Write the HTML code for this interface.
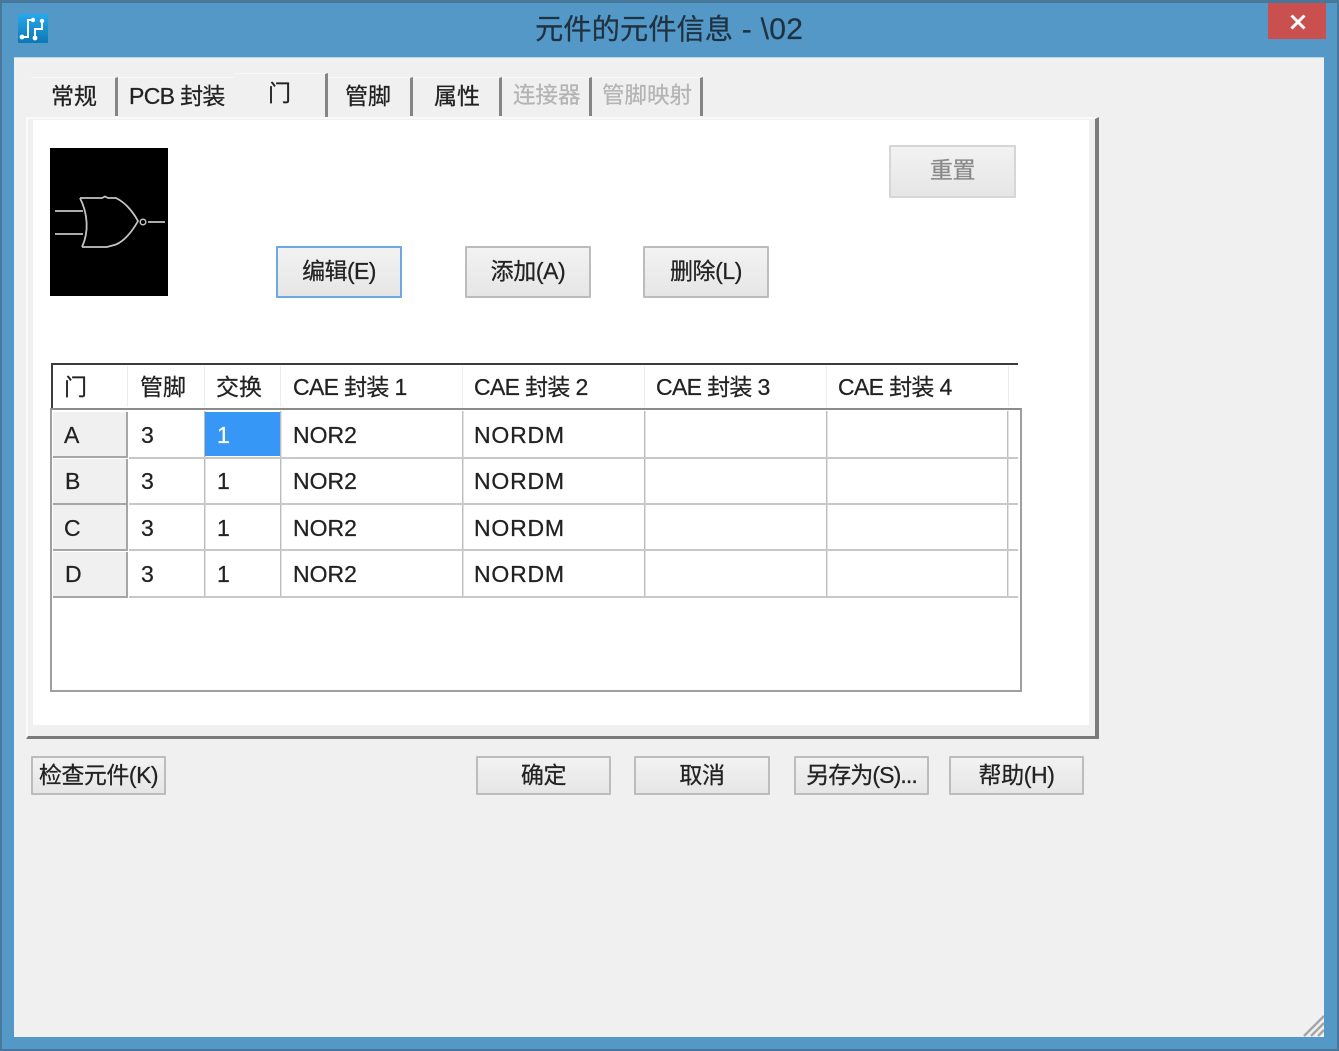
<!DOCTYPE html>
<html lang="zh-CN"><head><meta charset="utf-8"><title>元件的元件信息</title>
<style>
html,body{margin:0;padding:0;width:1339px;height:1051px;overflow:hidden;background:#5398c6}
body{position:relative;font-family:"Liberation Sans","Noto Sans CJK SC",sans-serif;color:#222;font-size:23px;-webkit-text-stroke:.25px currentColor}
div,span.t{position:absolute;box-sizing:border-box}
span.t{white-space:nowrap;line-height:30px;height:30px}
.btn{background:linear-gradient(#f2f2f2,#e6e6e6);border:2px solid #bcbcbc;text-align:center;white-space:nowrap;color:#222;border-radius:1px;letter-spacing:-.4px}
.tab{top:77px;height:39px;background:#f0f0f0;border-top:1px solid #f8f8f8;border-right:3px solid #858585}
.h{height:2px;background:#c8c8c8}
.v{width:1px;background:#bdbdbd;box-shadow:1px 0 0 #e2e2e2}
.hv{width:1px;background:#e9eef5;top:366px;height:41px}
.rh{left:53px;width:75px;height:46px;background:#f0f0f0;border-right:2px solid #a6a6a6;border-bottom:2px solid #a6a6a6}
.c{letter-spacing:-.65px}
.n{letter-spacing:.8px}
</style></head><body>
<div style="left:0;top:0;width:1339px;height:3px;background:#47789b"></div>
<div style="left:0;top:0;width:2px;height:1051px;background:#47789b"></div>
<div style="left:1337px;top:0;width:2px;height:1051px;background:#47789b"></div>
<div style="left:0;top:1049px;width:1339px;height:2px;background:#47789b"></div>

<!-- app icon -->
<svg style="position:absolute;left:18px;top:14px" width="30" height="30" viewBox="0 0 30 30">
<defs><linearGradient id="g" x1="0" y1="0" x2="0" y2="1"><stop offset="0" stop-color="#25a9ec"/><stop offset="1" stop-color="#0c78b4"/></linearGradient></defs>
<rect width="30" height="29" rx="1" fill="url(#g)"/>
<g fill="none" stroke="#fff" stroke-width="2"><path d="M4 23H10V6H15"/><path d="M24 7V15H17V23"/></g>
<g fill="#fff"><circle cx="4" cy="23" r="2.4"/><circle cx="15" cy="6" r="2.2"/><circle cx="24" cy="7" r="2.2"/><circle cx="17" cy="24" r="2.4"/></g>
</svg>
<span class="t" style="left:535px;top:14px;font-size:28.3px;color:#1f3242">元件的元件信息<span style="font-size:30px;letter-spacing:.3px"> - \02</span></span>

<!-- close -->
<div style="left:1268px;top:3px;width:58px;height:36px;background:#c9504e"></div>
<svg style="position:absolute;left:1289px;top:14px" width="18" height="16" viewBox="0 0 18 16"><path d="M2.500 1.500L15.500 14.500M15.500 1.500L2.500 14.500" stroke="#fff" stroke-width="3"/></svg>

<!-- client -->
<div style="left:14px;top:58px;width:1310px;height:979px;background:#f0f0f0"></div>
<div style="left:14px;top:57px;width:1310px;height:1px;background:#b9d4e4"></div>

<!-- resize grip -->
<svg style="position:absolute;left:1302px;top:1015px" width="22" height="22" viewBox="0 0 22 22"><path d="M2 21L22 1M9 21L22 8M16 21L22 15" stroke="#a5a5a5" stroke-width="2.400"/></svg>

<!-- tabs -->
<div class="tab" style="left:31px;width:87px"></div>
<div class="tab" style="left:118px;width:116px;border-right:0"></div>
<div class="tab" style="left:234px;top:73px;width:94px;height:46px"></div>
<div class="tab" style="left:328px;width:85px"></div>
<div class="tab" style="left:413px;width:89px"></div>
<div class="tab" style="left:502px;width:90px"></div>
<div class="tab" style="left:592px;width:111px"></div>
<span class="t" style="left:51px;top:81px">常规</span>
<span class="t c" style="left:129px;top:81px">PCB 封装</span>
<span class="t" style="left:268px;top:78px">门</span>
<span class="t" style="left:345px;top:81px">管脚</span>
<span class="t" style="left:434px;top:81px">属性</span>
<span class="t" style="left:513px;top:81px;color:#b4b4b4;font-size:22.500px">连接器</span>
<span class="t" style="left:602px;top:81px;color:#b4b4b4;font-size:22.500px">管脚映射</span>

<!-- panel -->
<div style="left:26px;top:117px;width:1073px;height:622px;background:#f0f0f0;border-top:2px solid #fafafa;border-left:2px solid #fafafa;border-right:4px solid #7b7b7b;border-bottom:3px solid #7b7b7b"></div>
<div style="left:33px;top:120px;width:1056px;height:605px;background:#fff"></div>

<!-- gate -->
<div style="left:50px;top:148px;width:118px;height:148px;background:#000"></div>
<svg style="position:absolute;left:50px;top:148px" width="118" height="148" viewBox="0 0 118 148">
<g fill="none" stroke="#c4c4c4" stroke-width="1.800">
<path d="M5 63H33M5 86H33"/>
<path d="M30 50C38 66 39 84 32 99"/>
<path d="M30 50H52L55 48.500L58 50H66C76 55 83 64 88 73C82 84 74 93 66 96.500L57 99H32"/>
<circle cx="93" cy="74" r="2.800" stroke-width="1.500"/>
<path d="M98 74H115"/>
</g></svg>

<!-- top buttons -->
<div class="btn" style="left:889px;top:145px;width:127px;height:53px;line-height:47px;color:#8a8a8a;border-color:#d6d6d6">重置</div>
<div class="btn" style="left:276px;top:246px;width:126px;height:52px;line-height:47px;border-color:#6fa8e0;letter-spacing:-.6px">编辑(E)</div>
<div class="btn" style="left:465px;top:246px;width:126px;height:52px;line-height:47px">添加(A)</div>
<div class="btn" style="left:643px;top:246px;width:126px;height:52px;line-height:47px">删除(L)</div>

<!-- grid -->
<div style="left:50px;top:408px;width:972px;height:284px;border:2px solid #9f9f9f;border-top:2px solid #8c8c8c;background:#fff"></div>
<div style="left:51px;top:363px;width:967px;height:2px;background:#3c3c3c"></div>
<div style="left:51px;top:363px;width:2px;height:45px;background:#3c3c3c"></div>
<div class="hv" style="left:127px"></div><div class="hv" style="left:204px"></div><div class="hv" style="left:280px"></div>
<div class="hv" style="left:462px"></div><div class="hv" style="left:644px"></div><div class="hv" style="left:826px"></div><div class="hv" style="left:1008px"></div>

<span class="t" style="left:64px;top:372px">门</span>
<span class="t" style="left:140px;top:372px">管脚</span>
<span class="t" style="left:216px;top:372px">交换</span>
<span class="t c" style="left:293px;top:372px">CAE 封装 1</span>
<span class="t c" style="left:474px;top:372px">CAE 封装 2</span>
<span class="t c" style="left:656px;top:372px">CAE 封装 3</span>
<span class="t c" style="left:838px;top:372px">CAE 封装 4</span>

<div class="rh" style="top:412px"></div><div class="rh" style="top:459px"></div><div class="rh" style="top:505px"></div><div class="rh" style="top:552px"></div>
<div class="v" style="left:204px;top:411px;height:187px"></div>
<div class="v" style="left:280px;top:411px;height:187px"></div>
<div class="v" style="left:462px;top:411px;height:187px"></div>
<div class="v" style="left:644px;top:411px;height:187px"></div>
<div class="v" style="left:826px;top:411px;height:187px"></div>
<div class="v" style="left:1007px;top:411px;height:187px"></div>
<div class="h" style="left:129px;top:457px;width:889px"></div>
<div class="h" style="left:129px;top:503px;width:889px"></div>
<div class="h" style="left:129px;top:549px;width:889px"></div>
<div class="h" style="left:129px;top:596px;width:889px"></div>
<div style="left:205px;top:412px;width:75px;height:44px;background:#3797f7"></div>

<span class="t" style="left:64px;top:420px">A</span><span class="t" style="left:141px;top:420px">3</span><span class="t" style="left:217px;top:420px;color:#fff">1</span><span class="t" style="left:293px;top:420px">NOR2</span><span class="t n" style="left:474px;top:420px">NORDM</span>
<span class="t" style="left:65px;top:466px">B</span><span class="t" style="left:141px;top:466px">3</span><span class="t" style="left:217px;top:466px">1</span><span class="t" style="left:293px;top:466px">NOR2</span><span class="t n" style="left:474px;top:466px">NORDM</span>
<span class="t" style="left:64px;top:513px">C</span><span class="t" style="left:141px;top:513px">3</span><span class="t" style="left:217px;top:513px">1</span><span class="t" style="left:293px;top:513px">NOR2</span><span class="t n" style="left:474px;top:513px">NORDM</span>
<span class="t" style="left:65px;top:559px">D</span><span class="t" style="left:141px;top:559px">3</span><span class="t" style="left:217px;top:559px">1</span><span class="t" style="left:293px;top:559px">NOR2</span><span class="t n" style="left:474px;top:559px">NORDM</span>

<!-- bottom buttons -->
<div class="btn" style="left:31px;top:756px;width:135px;height:39px;line-height:35px;letter-spacing:-.5px">检查元件(K)</div>
<div class="btn" style="left:476px;top:756px;width:135px;height:39px;line-height:35px">确定</div>
<div class="btn" style="left:634px;top:756px;width:136px;height:39px;line-height:35px">取消</div>
<div class="btn" style="left:794px;top:756px;width:135px;height:39px;line-height:35px;letter-spacing:-.9px">另存为(S)...</div>
<div class="btn" style="left:949px;top:756px;width:135px;height:39px;line-height:35px">帮助(H)</div>
</body></html>
